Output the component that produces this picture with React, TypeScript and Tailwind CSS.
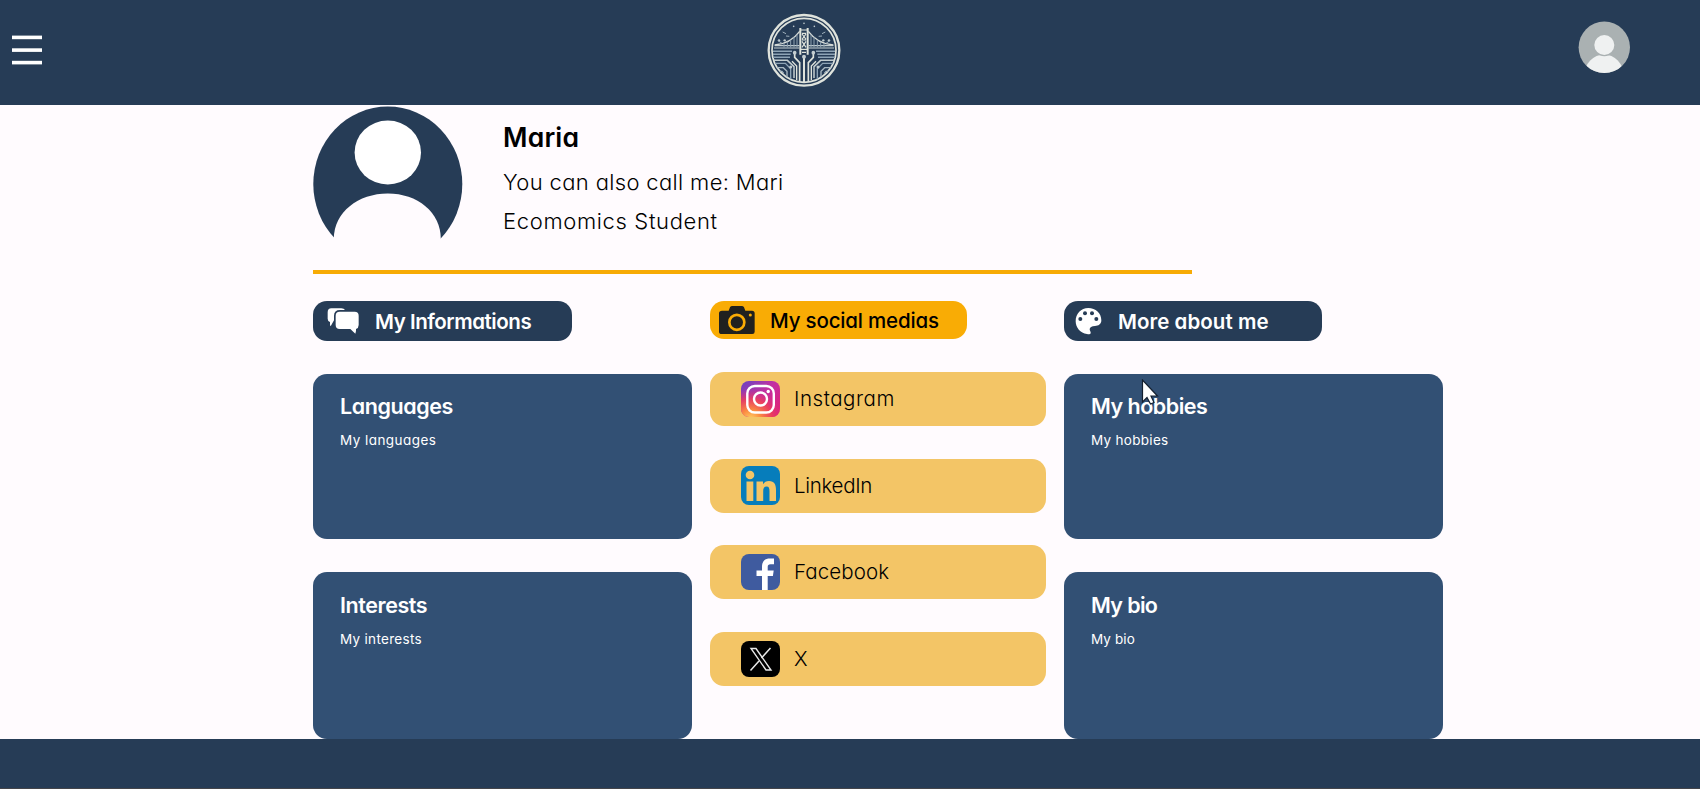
import type { ReactNode } from "react";

function Logo() {
  return (
    <svg width="110" height="104" viewBox="-42 -30 330 312" fill="none" stroke="#dfe3dc">
      <circle cx="120" cy="121" r="106" strokeWidth="7" />
      <circle cx="120" cy="121" r="96" strokeWidth="5" />
      <g stroke="#a9b8c2" strokeWidth="3.500">
        <path d="M32 107H106M134 107H208M30 114H106M134 114H210" stroke="#c3cdd0" />
        <path d="M32 105Q80 101 107 64M208 105Q160 101 133 64" stroke="#d5dad7" strokeWidth="4" />
        <path d="M60 99V112M70 95V112M80 89V112M90 81V112M99 74V112M141 74V112M150 81V112M160 89V112M170 95V112M180 99V112" strokeWidth="3" stroke="#8ea2b1" />
        <path d="M27 124H84M27 133H80M27 142H78M156 124H213M160 133H213M162 142H213" stroke="#8ea4b6" strokeWidth="4.500" />
        <path d="M29 151H70L90 170V204M150 204V170L170 151H211" stroke="#c3cdd0" strokeWidth="4.500" />
        <path d="M33 160H64L80 176V208M160 208V176L176 160H207" stroke="#8ea4b6" strokeWidth="4" />
        <path d="M38 173H58L69 184V202M171 202V184L182 173H202" strokeWidth="4" />
        <path d="M45 184H54L59 190M181 190L186 184H195" />
      </g>
      <g strokeWidth="5">
        <path d="M109 54V134M131 54V134" strokeWidth="6" />
        <path d="M120 142V216" strokeWidth="6" />
        <path d="M92 130V142L107 158V214M148 130V142L133 158V214" />
        <path d="M84 154L98 168V210M156 154L142 168V210" strokeWidth="4" />
        <path d="M111 60H129M114 70H126M114 72L126 88M126 72L114 88M114 90H126M114 94L126 112M126 94L114 112M111 118H129M114 127H126" strokeWidth="3.500" />
      </g>
      <g fill="#c3cdd0" stroke="none">
        <circle cx="120" cy="40" r="2.500" />
        <circle cx="89" cy="49" r="2.500" />
        <circle cx="151" cy="49" r="2.500" />
        <circle cx="92" cy="128" r="5.500" />
        <circle cx="148" cy="128" r="5.500" />
        <circle cx="120" cy="140" r="6" />
        <circle cx="80" cy="171" r="4.500" />
        <circle cx="162" cy="171" r="4.500" />
        <circle cx="45" cy="91" r="3.500" />
        <circle cx="62" cy="91" r="3.500" />
        <circle cx="178" cy="91" r="3.500" />
        <circle cx="195" cy="91" r="3.500" />
      </g>
      <path d="M56 66L66 71M184 66L174 71M66 78L76 79M174 78L164 79M42 92L54 100M198 92L186 100" strokeWidth="3" stroke="#9fb0bc" />
    </svg>
  );
}

function MenuIcon() {
  return (
    <svg width="30" height="32" viewBox="0 0 30 32" fill="#fff">
      <rect y="1.600" width="30" height="3.600" />
      <rect y="14.300" width="30" height="3.600" />
      <rect y="26.800" width="30" height="3.600" />
    </svg>
  );
}

function AccountIcon() {
  return (
    <svg width="52" height="52" viewBox="0 0 52 52">
      <clipPath id="account">
        <circle cx="26.300" cy="26.300" r="25.700" />
      </clipPath>
      <g clipPath="url(#account)">
        <rect width="52" height="52" fill="#aab1b2" />
        <ellipse cx="26" cy="54" rx="19.500" ry="20.500" fill="#eff1f1" />
        <circle cx="26.300" cy="24" r="11.200" fill="#aab1b2" />
        <circle cx="26.300" cy="24" r="10" fill="#eff1f1" />
      </g>
    </svg>
  );
}

function ProfileIcon() {
  return (
    <svg width="150" height="133" viewBox="-0.3 0 150 133">
      <ellipse cx="74.5" cy="78" rx="74.5" ry="77.5" fill="#263c56" />
      <ellipse cx="74.5" cy="46.5" rx="33.2" ry="32" fill="#fff" />
      <path d="M20.5 140V133C20.5 106 45 87.5 74.5 87.5S127.5 106 127.5 133V140Z" fill="#fffbfe" />
    </svg>
  );
}

function ChatIcon() {
  return (
    <svg width="33" height="26" viewBox="83 54 99 78" fill="#fff">
      <path d="M96 55H126Q134 55 137 60H122Q104 60 104 77V91L94 109Q91 107 92 96Q85 94 85 86V67Q85 55 96 55Z" />
      <path d="M121 65H166Q178 65 178 77V105Q178 114 170 117Q171 124 168 131L153 117H121Q109 117 109 105V77Q109 65 121 65Z" />
    </svg>
  );
}

function CameraIcon() {
  return (
    <svg width="36" height="28" viewBox="57 48 108 84">
      <path d="M66 62H86L90 52Q92 48 97 48H125Q130 48 132 52L136 62H156Q164 62 164 70V125Q164 132 157 132H65Q57 132 57 125V70Q57 62 66 62Z" fill="#20211f" />
      <circle cx="110.500" cy="97" r="22.500" fill="none" stroke="#f9ac05" strokeWidth="8" />
      <circle cx="151" cy="75" r="4.500" fill="#f9ac05" />
    </svg>
  );
}

function PaletteIcon() {
  return (
    <svg width="27" height="28" viewBox="60 52 81 84">
      <path d="M100 55C122 55 139 70 139 92C139 104 130 109 120 109C110 109 104 113 104 119C104 124 108 126 107 131C105 135 100 134 96 133C76 131 62 114 62 95C62 72 78 55 100 55Z" fill="#fff" />
      <g fill="#263c56">
        <circle cx="76" cy="88" r="6" />
        <circle cx="90" cy="71" r="6" />
        <circle cx="111" cy="71" r="6" />
        <circle cx="124" cy="88" r="6" />
      </g>
    </svg>
  );
}

function InstagramIcon() {
  return (
    <svg width="39" height="36" viewBox="0 0 39 36" fill="none">
      <defs>
        <linearGradient id="ig-base" x1="0" y1="0" x2="1" y2="1">
          <stop offset="0" stopColor="#6544c4" />
          <stop offset="0.45" stopColor="#c32fa2" />
          <stop offset="1" stopColor="#e5206f" />
        </linearGradient>
        <radialGradient id="ig-glow" cx="0.25" cy="1.05" r="0.85">
          <stop offset="0" stopColor="#ffcf62" />
          <stop offset="0.3" stopColor="#fb8a41" />
          <stop offset="0.65" stopColor="#ee4058" stopOpacity="0.85" />
          <stop offset="1" stopColor="#d42f8a" stopOpacity="0" />
        </radialGradient>
      </defs>
      <rect width="39" height="36" rx="8" fill="url(#ig-base)" />
      <rect width="39" height="36" rx="8" fill="url(#ig-glow)" />
      <g stroke="#fff" strokeWidth="2.4">
        <rect x="6.300" y="5" width="26.500" height="26.500" rx="7.500" />
        <circle cx="19.500" cy="18" r="6.500" />
      </g>
      <circle cx="27.200" cy="10.500" r="1.700" fill="#fff" />
    </svg>
  );
}

function LinkedInIcon() {
  return (
    <svg width="39" height="39" viewBox="0 0 39 39">
      <rect width="39" height="39" rx="8" fill="#067dbb" />
      <g fill="#f3c566">
        <circle cx="9" cy="9" r="4.300" />
        <path d="M5.500 15.500H12.300V35H5.500ZM15.500 15.500H22V18.300C23.200 16.200 25.300 15 28 15C33.500 15 35 18.800 35 24V35H28.500V25C28.500 22.500 28 20.500 25.600 20.500C23 20.500 22.200 22.500 22.200 25V35H15.500Z" />
      </g>
    </svg>
  );
}

function FacebookIcon() {
  return (
    <svg width="39" height="36" viewBox="0 0 39 36">
      <rect width="39" height="36" rx="8" fill="#3f5b9f" />
      <path d="M21 36V22H15.500V16.500H21V13C21 7 24 4.500 29 4.500H33V10.200H29.500C27.500 10.200 26.700 11 26.700 13V16.500H32.700L31.900 22H26.700V36Z" fill="#fff" />
    </svg>
  );
}

function XIcon() {
  return (
    <svg width="39" height="36" viewBox="0 0 39 36" fill="none" stroke="#e8e8e8">
      <rect width="39" height="36" rx="8" fill="#000" stroke="none" />
      <path d="M10 7.500H15L30 29H25Z" strokeWidth="1.400" />
      <path d="M29.500 7L20.500 17M18 20L9.500 29.500" strokeWidth="1.500" />
    </svg>
  );
}

function Cursor() {
  return (
    <svg className="absolute left-[77px] top-[5px]" width="18" height="27" viewBox="0 0 18 27">
      <path d="M1.500 1V23L6 18.500L9.500 25L13 23.500L10 17H16.500Z" fill="#fff" stroke="#14202f" strokeWidth="1.200" />
    </svg>
  );
}

function Card({ title, text, titleClass, textClass, className, children }: {
  title: string;
  text: string;
  titleClass: string;
  textClass: string;
  className: string;
  children?: ReactNode;
}) {
  return (
    <section className={`relative rounded-[14px] bg-[#325074] text-white ${className}`}>
      <h3 className={`text-[21.5px] leading-8 font-semibold whitespace-nowrap ${titleClass}`}>{title}</h3>
      <p className={`mt-[6px] text-[13.5px] leading-6 whitespace-nowrap ${textClass}`}>{text}</p>
      {children}
    </section>
  );
}

function SocialRow({ name, icon, nameClass }: { name: string; icon: ReactNode; nameClass: string }) {
  return (
    <a className="flex h-[54px] items-center gap-[14px] rounded-[14px] bg-[#f3c566] pl-[31px]">
      {icon}
      <span className={`text-[20.5px] leading-7 font-light ${nameClass}`}>{name}</span>
    </a>
  );
}

export default function App() {
  return (
    <div className="flex h-[789px] w-[1700px] flex-col overflow-hidden bg-[#fffbfe] font-['Inter','Open_Sans',sans-serif] text-black [font-feature-settings:'cv11']">
      <header className="grid h-[105px] shrink-0 grid-cols-[750px_110px_1fr] bg-[#263c56]">
        <button className="mt-[34px] ml-3 h-8 w-[30px]">
          <MenuIcon />
        </button>
        <Logo />
        <div className="mt-[21px] mr-[70px] flex justify-end">
          <AccountIcon />
        </div>
      </header>

      <main className="flex h-[634px] shrink-0 flex-col pl-[313px]">
        <div className="flex h-[165px] w-[879px] shrink-0 gap-[40px] pt-px">
          <ProfileIcon />
          <div className="pt-[13px] whitespace-nowrap">
            <h1 className="text-[26.5px] leading-9 font-semibold tracking-[0.2px]">Maria</h1>
            <p className="mt-[11px] text-[22px] leading-8 font-light tracking-[0.35px]">You can also call me: Mari</p>
            <p className="mt-[7px] text-[22px] leading-8 font-light tracking-[0.65px]">Ecomomics Student</p>
          </div>
        </div>
        <div className="h-1 w-[879px] shrink-0 bg-[#f7ab05]" />
        <div className="flex items-start pt-[27px]">
          <div className="mr-[18px] w-[379px]">
            <div className="flex h-10 w-[259px] items-center rounded-[14px] bg-[#263c56] pl-[14px] text-white">
              <ChatIcon />
              <h2 className="ml-[15px] pt-px text-[20.5px] leading-8 font-semibold tracking-[-0.45px] whitespace-nowrap">My Informations</h2>
            </div>
            <Card title="Languages" text="My languages" titleClass="tracking-[-0.42px]" textClass="tracking-[0.45px]" className="mt-[33px] h-[165px] pt-4 pl-[27px]" />
            <Card title="Interests" text="My interests" titleClass="tracking-[-0.42px]" textClass="tracking-[0.3px]" className="mt-[33px] h-[167px] pt-[17px] pl-[27px]" />
          </div>

          <div className="mr-[18px] w-[336px]">
            <div className="flex h-[38px] w-[257px] items-center rounded-[14px] bg-[#f9ac05] pl-[9px]">
              <CameraIcon />
              <h2 className="ml-[15px] pt-[2px] text-[20.5px] leading-8 font-medium tracking-[-0.18px] whitespace-nowrap">My social medias</h2>
            </div>
            <nav className="mt-[33px] flex flex-col gap-[32.5px]">
              <SocialRow name="Instagram" icon={<InstagramIcon />} nameClass="tracking-[0.56px]" />
              <SocialRow name="LinkedIn" icon={<LinkedInIcon />} nameClass="tracking-[-0.3px]" />
              <SocialRow name="Facebook" icon={<FacebookIcon />} nameClass="tracking-[0.1px]" />
              <SocialRow name="X" icon={<XIcon />} nameClass="" />
            </nav>
          </div>

          <div className="w-[379px]">
            <div className="flex h-10 w-[258px] items-center rounded-[14px] bg-[#263c56] pl-[11px] text-white">
              <PaletteIcon />
              <h2 className="ml-[16px] pt-px text-[20.5px] leading-8 font-semibold tracking-[0.05px] whitespace-nowrap">More about me</h2>
            </div>
            <Card title="My hobbies" text="My hobbies" titleClass="tracking-[-0.5px]" textClass="tracking-[0.3px]" className="mt-[33px] h-[165px] pt-4 pl-[27px]">
              <Cursor />
            </Card>
            <Card title="My bio" text="My bio" titleClass="tracking-[-0.65px]" textClass="tracking-[0.1px]" className="mt-[33px] h-[167px] pt-[17px] pl-[27px]" />
          </div>
        </div>
      </main>

      <footer className="h-[50px] shrink-0 border-b border-[#44454a] bg-[#263c56]" />
    </div>
  );
}
